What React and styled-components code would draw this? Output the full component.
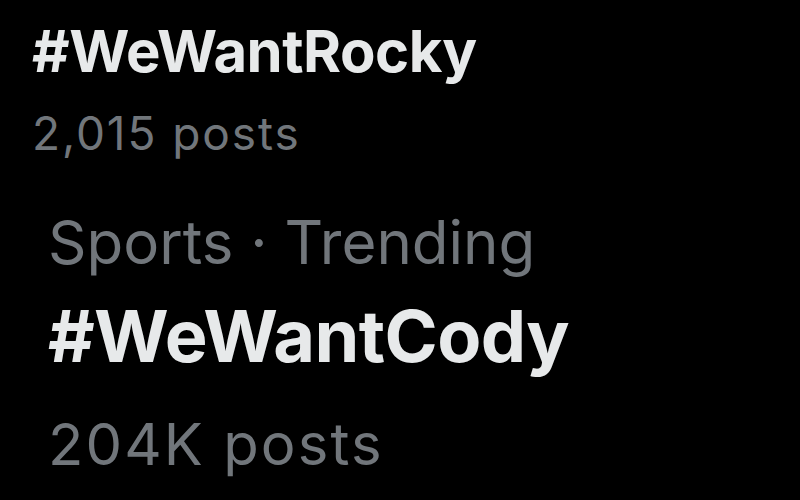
import React from 'react'
import styled, { createGlobalStyle } from 'styled-components'

const GlobalStyle = createGlobalStyle`
  html, body {
    margin: 0;
    padding: 0;
    background: #000000;
  }
  body {
    width: 800px;
    height: 500px;
    overflow: hidden;
    font-family: Inter, 'Noto Sans', sans-serif;
  }
`

// two trend rows, the second one captured at a bigger zoom
const sizes = {
  small: {
    indent: 32,
    category: { font: 48, line: 70 },
    tag: { font: 58, line: 80, spacing: -0.5 },
    posts: { font: 46, line: 84, spacing: 1.9 },
  },
  large: {
    indent: 48,
    category: { font: 60, line: 87 },
    tag: { font: 72, line: 100, spacing: -0.6 },
    posts: { font: 58, line: 116, spacing: 2.1 },
  },
}

const trends = [
  { tag: '#WeWantRocky', posts: '2,015 posts', size: 'small' },
  { category: 'Sports · Trending', tag: '#WeWantCody', posts: '204K posts', size: 'large' },
]

export default function App() {
  return (
    <Page>
      <GlobalStyle />
      {trends.map((t) => {
        const s = sizes[t.size]
        return (
          <Trend key={t.tag} $indent={s.indent}>
            {t.category && <Category $s={s.category}>{t.category}</Category>}
            <Tag $s={s.tag}>{t.tag}</Tag>
            <Posts $s={s.posts}>{t.posts}</Posts>
          </Trend>
        )
      })}
    </Page>
  )
}

const Page = styled.div`
  width: 800px;
  height: 500px;
  background: #000000;
  display: flex;
  flex-direction: column;
  gap: 24px;
  padding-top: 11px;
  box-sizing: border-box;
  overflow: hidden;
`

const Trend = styled.div`
  display: flex;
  flex-direction: column;
  padding-left: ${(p) => p.$indent}px;
`

const Category = styled.p`
  margin: 0;
  color: #71767b;
  font-weight: 400;
  font-size: ${(p) => p.$s.font}px;
  line-height: ${(p) => p.$s.line}px;
  white-space: nowrap;
`

const Tag = styled.p`
  margin: 0;
  color: #e7e9ea;
  font-weight: 700;
  font-size: ${(p) => p.$s.font}px;
  line-height: ${(p) => p.$s.line}px;
  letter-spacing: ${(p) => p.$s.spacing}px;
  white-space: nowrap;
`

const Posts = styled.p`
  margin: 0;
  color: #71767b;
  font-weight: 400;
  font-size: ${(p) => p.$s.font}px;
  line-height: ${(p) => p.$s.line}px;
  letter-spacing: ${(p) => p.$s.spacing}px;
  white-space: nowrap;
`
